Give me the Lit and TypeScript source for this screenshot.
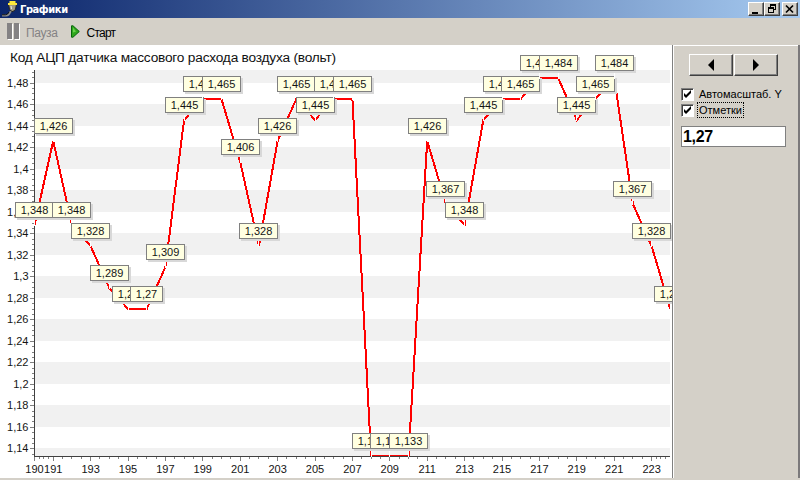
import { LitElement, html, svg, css } from "lit";
import { customElement } from "lit/decorators.js";

const FIRST = 190;
const VALUES = [
  1.348, 1.426, 1.348, 1.328, 1.289, 1.27, 1.27, 1.309, 1.445, 1.465, 1.465, 1.406,
  1.328, 1.426, 1.465, 1.445, 1.465, 1.465, 1.133, 1.133, 1.133, 1.426, 1.367, 1.348,
  1.445, 1.465, 1.465, 1.484, 1.484, 1.445, 1.465, 1.484, 1.367, 1.328, 1.27,
];
const LEFT = 34;
const RIGHT = 670;
const TOP = 24;
const BOTTOM = 410;
const xOf = (n: number) => LEFT + 0.5 + (n - FIRST) * 18.7;
const yOf = (v: number) => 37.2 + (1.48 - v) * 1075.5;
const fmt = (v: number) => String(Number(v.toFixed(3))).replace(".", ",");

@customElement("adc-chart")
export class AdcChart extends LitElement {
  static styles = css`
    :host { display: block; background: #fff; overflow: hidden; }
    svg { display: block; }
    text { font-family: "Liberation Sans", Arial, sans-serif; font-size: 11px; fill: #141414; }
    .title { font-size: 13.7px; fill: #111; }
    .band { fill: #f1f1f1; }
    .axis { fill: #404040; }
    .tick { fill: #808080; }
    .line { fill: none; stroke: #f00; stroke-width: 2; }
    .stem { fill: #fff; }
    .shadow { fill: #d8d8d8; }
    .tag { fill: #ffffe1; stroke: #808080; stroke-width: 1; }
    .end { text-anchor: end; }
    .mid { text-anchor: middle; }
  `;

  private bands() {
    const out = [svg`<rect class="band" x="35" y=${TOP} width="635" height="13"></rect>`];
    for (let v = 1.46; v > 1.13; v -= 0.04) {
      const y = Math.floor(yOf(v));
      const end = Math.min(BOTTOM, Math.floor(yOf(v - 0.02)));
      out.push(svg`<rect class="band" x="35" y=${y} width="635" height=${end - y}></rect>`);
    }
    return out;
  }

  private yAxis() {
    const out = [];
    for (let i = -2; i <= 70; i++) {
      const v = 1.48 - i * 0.005;
      const y = Math.floor(yOf(v));
      if (y > BOTTOM) break;
      const major = i % 4 === 0;
      out.push(svg`<rect class="tick" x=${major ? 30 : 32} y=${y} width=${major ? 4 : 2} height="1"></rect>`);
      if (major) out.push(svg`<text class="end" x="28.5" y=${y + 4}>${fmt(v)}</text>`);
    }
    return out;
  }

  private xAxis() {
    const out = [];
    const tick = (n: number, major: boolean) =>
      svg`<rect class="tick" x=${Math.round(xOf(n) - 0.5)} y="411" width="1" height=${major ? 4 : 2}></rect>`;
    for (const n of [190, 190.25, 190.5, 190.75, 223.25, 223.5, 223.75]) out.push(tick(n, n === 190));
    for (let n = 191; n <= 223; n += 0.5) out.push(tick(n, n % 2 === 1));
    for (const n of [190, ...Array.from({ length: 17 }, (_, i) => 191 + i * 2)])
      out.push(svg`<text class="mid" x=${xOf(n)} y="427">${n}</text>`);
    return out;
  }

  private tag(v: number, i: number) {
    const x = Math.round(xOf(FIRST + i) - 0.5);
    const y = Math.floor(yOf(v));
    const text = fmt(v);
    const w = text.length === 4 ? 32 : 38;
    const l = x - w / 2;
    return svg`
      <rect class="stem" x=${x} y=${y - 7} width="1" height="8"></rect>
      <rect class="shadow" x=${l + 2} y=${y - 21} width=${w + 1} height="16"></rect>
      <rect class="tag" x=${l + 0.5} y=${y - 22.5} width=${w} height="15"></rect>
      <text class="mid" x=${x + 0.5} y=${y - 11}>${text}</text>`;
  }

  render() {
    const points = VALUES.map((v, i) => `${xOf(FIRST + i)},${Math.floor(yOf(v))}`).join(" ");
    return html`<svg width="672" height="433" viewBox="0 -1 672 433">
      <clipPath id="plot"><rect x="34" y="20" width="636" height="391"></rect></clipPath>
      <text class="title" x="10" y="16" textLength="326">Код АЦП датчика массового расхода воздуха (вольт)</text>
      <g shape-rendering="crispEdges">${this.bands()}</g>
      ${this.yAxis()} ${this.xAxis()}
      <rect class="axis" x=${LEFT} y=${TOP} width="1" height="387"></rect>
      <polyline class="line" points=${points} clip-path="url(#plot)" shape-rendering="crispEdges"></polyline>
      <rect class="axis" x=${LEFT} y=${BOTTOM} width=${RIGHT - LEFT} height="1"></rect>
      ${VALUES.map((v, i) => this.tag(v, i))}
    </svg>`;
  }
}

@customElement("app-root")
export class AppRoot extends LitElement {
  static styles = css`
    :host {
      display: flex; flex-direction: column; width: 800px; height: 480px; overflow: hidden;
      background: #d4d0c8; font: 11px "Liberation Sans", Arial, sans-serif; color: #000;
    }
    svg { display: block; flex: none; }
    .titlebar {
      display: flex; align-items: center; height: 18px; box-sizing: border-box; padding: 0 2px;
      background: linear-gradient(90deg, #0a246a, #a6caf0);
    }
    .caption { flex: 1; color: #fff; font-weight: bold; font-family: "DejaVu Sans Condensed", sans-serif; font-size: 11px; letter-spacing: -0.4px; padding-left: 2px; }
    .sys { display: flex; height: 14px; }
    .sys .btn { width: 16px; height: 14px; }
    .sys .close { margin-left: 2px; }
    .btn {
      box-sizing: border-box; display: flex; align-items: center; justify-content: center;
      background: #d4d0c8; border: 1px solid; border-color: #fff #404040 #404040 #fff;
      box-shadow: inset -1px -1px #808080;
    }
    .toolbar { display: flex; align-items: center; height: 27px; padding-left: 7px; box-sizing: border-box; }
    .toolbar span { font-size: 12px; line-height: 14px; padding-top: 2px; }
    .pause { color: #848284; margin: 0 13px 0 6px; letter-spacing: -0.35px; }
    .start { margin-left: 7px; letter-spacing: -0.8px; }
    .main { display: flex; height: 433px; }
    .side {
      flex: 1; box-sizing: border-box; border-left: 1px solid #808080; border-right: 2px solid #7b797b;
      box-shadow: inset 1px 1px #fff; padding: 9px 0 0 8px;
    }
    .nav { display: flex; gap: 1px; padding-left: 8px; }
    .nav .btn { width: 44px; height: 22px; }
    .check { display: flex; align-items: center; height: 16px; }
    .checks { margin-top: 10px; }
    .box {
      width: 13px; height: 13px; box-sizing: border-box; background: #fff;
      border: 1px solid; border-color: #808080 #fff #fff #808080; box-shadow: inset 1px 1px #404040;
    }
    .check span { font-size: 11px; line-height: 14px; margin-left: 4px; padding: 0 1px; }
    .check .auto { letter-spacing: 0; }
    .check .marks { outline: 1px dotted #000; letter-spacing: 0; }
    .value {
      box-sizing: border-box; width: 105px; height: 21px; margin-top: 8px; border: 1px solid #808080;
      background: #fff; font: bold 16px/19px "Liberation Sans", Arial, sans-serif; letter-spacing: -0.3px; padding-left: 1px;
    }
  `;

  render() {
    return html`
      <div class="titlebar">
        <svg width="16" height="16" viewBox="0 0 16 16">
          <path d="M0 14.5h4q3 0 4-3l1.500-2" fill="none" stroke="#8c8c8c" stroke-width="2"></path>
          <path d="M0 13.800h3.500q2.500-.3 3.500-2.800" fill="none" stroke="#111"></path>
          <path d="M6.500 3h8l-1 5.500-2.500 2H10l-2.500-2z" fill="#a39d82" stroke="#222"></path>
          <path d="M7.500 0h6v2h1.500v2H6V2h1.500z" fill="#ffe93b"></path>
          <path d="M9 5l.5 3" stroke="#eee"></path>
        </svg>
        <div class="caption">Графики</div>
        <div class="sys">
          <div class="btn"><svg width="12" height="10"><path d="M2 8h6v2H2z"></path></svg></div>
          <div class="btn"><svg width="12" height="10" shape-rendering="crispEdges"><path d="M4 0h6v6H8V5h1V2H5v1H4zM2 3h6v6H2zM3 5v3h4V5z" fill-rule="evenodd"></path></svg></div>
          <div class="btn close"><svg width="12" height="10"><path d="M2 1.5l7 7M9 1.5l-7 7" stroke="#000" stroke-width="1.7"></path></svg></div>
        </div>
      </div>
      <div class="toolbar">
        <svg width="13" height="17"><path d="M1 1h5v16H1zM8 1h5v16H8z" fill="#fff"></path><path d="M0 0h5v16H0zM7 0h5v16H7z" fill="#848284"></path></svg>
        <span class="pause">Пауза</span>
        <svg width="9" height="13"><path d="M.5 .8L2 .8L8.3 6.5L2 12.2L.5 12.2z" fill="#2fa71c" stroke="#06660b"></path><path d="M2 2.5v5l3-1z" fill="#6bd24f"></path></svg>
        <span class="start">Старт</span>
      </div>
      <div class="main">
        <adc-chart></adc-chart>
        <div class="side">
          <div class="nav">
            <div class="btn"><svg width="10" height="12"><path d="M8 0v12L2 6z"></path></svg></div>
            <div class="btn"><svg width="10" height="12"><path d="M2 0v12L8 6z"></path></svg></div>
          </div>
          <div class="checks">
            ${[["Автомасштаб. Y", "auto"], ["Отметки", "marks"]].map(
              ([label, cls]) => html`<div class="check">
                <div class="box"><svg width="11" height="11"><path d="M2 4v3l2 2 5-5V1L4 6z"></path></svg></div>
                <span class=${cls}>${label}</span>
              </div>`
            )}
          </div>
          <div class="value">1,27</div>
        </div>
      </div>
    `;
  }
}
